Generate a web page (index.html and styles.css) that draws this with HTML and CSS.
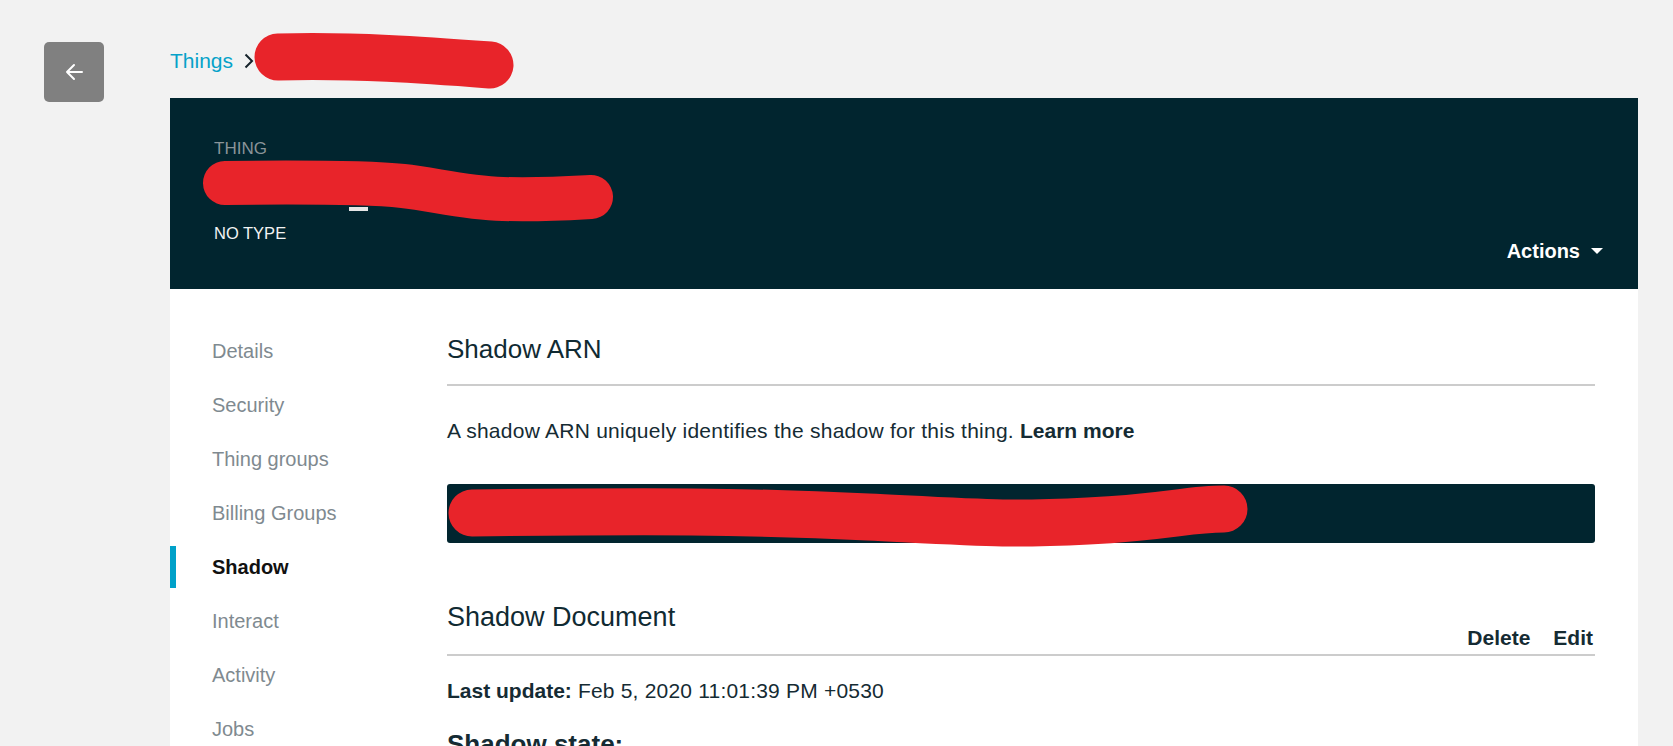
FILE: index.html
```html
<!DOCTYPE html>
<html lang="en">
<head>
<meta charset="utf-8">
<title>Thing - Shadow</title>
<link rel="stylesheet" href="styles.css">
</head>
<body>
<div class="page">
  <button class="back" aria-label="Back">
    <svg width="22" height="22" viewBox="0 0 22 22"><path d="M4 11H19M11 4L4 11L11 18" fill="none" stroke="#fff" stroke-width="2" stroke-linecap="round" stroke-linejoin="round"/></svg>
  </button>
  <div class="main">
    <div class="breadcrumb">
      <a class="crumb-link">Things</a>
      <svg class="crumb-sep" width="10" height="16" viewBox="0 0 10 16"><path d="M1.5 1.5L8 8L1.5 14.5" fill="none" stroke="#16232b" stroke-width="2"/></svg>
      <svg class="scribble crumb-scribble" width="262" height="56" viewBox="0 0 262 56"><path d="M24 24C100 22 170 27 236 32" fill="none" stroke="#e8242a" stroke-width="47" stroke-linecap="round"/></svg>
    </div>
    <header class="thing-header">
      <div class="thing-info">
        <div class="thing-label">THING</div>
        <svg class="scribble name-scribble" width="414" height="62" viewBox="0 0 414 62"><rect x="146" y="46" width="19" height="4" fill="#e6e6e6"/><path d="M22 22C110 21 170 22 200 25S260 37 300 38S370 37 388 36" fill="none" stroke="#e8242a" stroke-width="44" stroke-linecap="round"/></svg>
        <div class="thing-type">NO TYPE</div>
      </div>
      <div class="actions">Actions <span class="caret"></span></div>
    </header>
    <div class="card">
      <nav class="side-nav">
        <div class="nav-item">Details</div>
        <div class="nav-item">Security</div>
        <div class="nav-item">Thing groups</div>
        <div class="nav-item">Billing Groups</div>
        <div class="nav-item active">Shadow</div>
        <div class="nav-item">Interact</div>
        <div class="nav-item">Activity</div>
        <div class="nav-item">Jobs</div>
      </nav>
      <section class="content">
        <h2 class="section-title">Shadow ARN</h2>
        <p class="desc">A shadow ARN uniquely identifies the shadow for this thing. <b>Learn more</b></p>
        <div class="arn-box">
          <svg class="scribble arn-scribble" width="800" height="60" viewBox="0 0 800 60"><path d="M24 26C200 24 300 24 420 30S560 38 640 34S740 22 776 22" fill="none" stroke="#e8242a" stroke-width="47" stroke-linecap="round"/></svg>
        </div>
        <div class="doc-head">
          <h2 class="doc-title">Shadow Document</h2>
          <div class="doc-actions"><span>Delete</span><span>Edit</span></div>
        </div>
        <p class="last-update"><b>Last update:</b> Feb 5, 2020 11:01:39 PM +0530</p>
        <h3 class="state-title">Shadow state:</h3>
      </section>
    </div>
  </div>
</div>
</body>
</html>
```

FILE: styles.css
```css
* { box-sizing: border-box; }
html, body { margin: 0; padding: 0; }
body {
  background: #f2f2f2;
  font-family: "Liberation Sans", Arial, sans-serif;
  color: #152b33;
  overflow: hidden;
  height: 746px;
}
.page {
  display: flex;
  align-items: flex-start;
  padding-left: 44px;
}
.back {
  margin-top: 42px;
  width: 60px;
  height: 60px;
  border: none;
  border-radius: 5px;
  background: #808080;
  display: flex;
  align-items: center;
  justify-content: center;
  padding: 0;
  margin-right: 66px;
}
.back svg { display: block; }
.main { width: 1468px; }
.breadcrumb {
  display: flex;
  align-items: center;
  height: 98px;
  padding-top: 35px;
  padding-bottom: 11px;
}
.crumb-link {
  color: #06a2c9;
  font-size: 21px;
  line-height: 26px;
}
.crumb-sep { margin-left: 11px; display: block; }
.scribble { display: block; overflow: visible; }
.crumb-scribble { margin-left: 0; }
.thing-header {
  height: 191px;
  background: #01252f;
  display: flex;
  justify-content: space-between;
  align-items: flex-start;
  padding: 41px 35px 26px 44px;
}
.thing-label {
  color: #8a9499;
  font-size: 17px;
  line-height: 20px;
}
.name-scribble { margin-left: -11px; margin-top: 2px; }
.thing-type {
  color: #f2f4f4;
  font-size: 16.5px;
  line-height: 20px;
  margin-top: 0;
}
.actions {
  align-self: flex-end;
  color: #fff;
  font-weight: bold;
  font-size: 20px;
  line-height: 24px;
  display: flex;
  align-items: center;
}
.caret {
  display: block;
  width: 0;
  height: 0;
  border-left: 6px solid transparent;
  border-right: 6px solid transparent;
  border-top: 6px solid #fff;
  margin-left: 11px;
}
.card {
  background: #fff;
  display: flex;
  height: 460px;
}
.side-nav {
  width: 277px;
  padding-top: 35px;
}
.nav-item {
  height: 54px;
  display: flex;
  align-items: center;
  font-size: 20px;
  color: #7f8a90;
}
.nav-item::before {
  content: "";
  display: block;
  width: 6px;
  height: 42px;
  margin-right: 36px;
  background: transparent;
}
.nav-item.active { color: #111; font-weight: bold; }
.nav-item.active::before { background: #00a1c9; }
.content {
  width: 1148px;
  padding-top: 44px;
}
.section-title {
  margin: 0;
  font-weight: normal;
  font-size: 26px;
  line-height: 32px;
  color: #102a32;
  padding-bottom: 19px;
  border-bottom: 2px solid #cccccc;
}
.desc {
  margin: 32px 0 0;
  font-size: 21px;
  line-height: 26px;
  letter-spacing: 0.25px;
}
.desc b { letter-spacing: 0; }
.arn-box {
  margin-top: 40px;
  height: 59px;
  background: #01252f;
  border-radius: 3px;
  padding: 3px 0 0 1px;
}
.doc-head {
  margin-top: 58px;
  display: flex;
  justify-content: space-between;
  align-items: flex-start;
  padding-bottom: 3px;
  border-bottom: 2px solid #cccccc;
}
.doc-title {
  margin: 0;
  font-weight: normal;
  font-size: 27px;
  line-height: 32px;
  color: #102a32;
}
.doc-actions {
  display: flex;
  gap: 23px;
  font-weight: bold;
  font-size: 21px;
  line-height: 26px;
  margin-top: 24px;
  padding-right: 2px;
}
.last-update {
  margin: 22px 0 0;
  font-size: 21px;
  line-height: 26px;
  letter-spacing: 0.2px;
}
.last-update b { letter-spacing: 0; }
.state-title {
  margin: 24px 0 0;
  font-size: 26px;
  line-height: 32px;
  font-weight: bold;
}
```
